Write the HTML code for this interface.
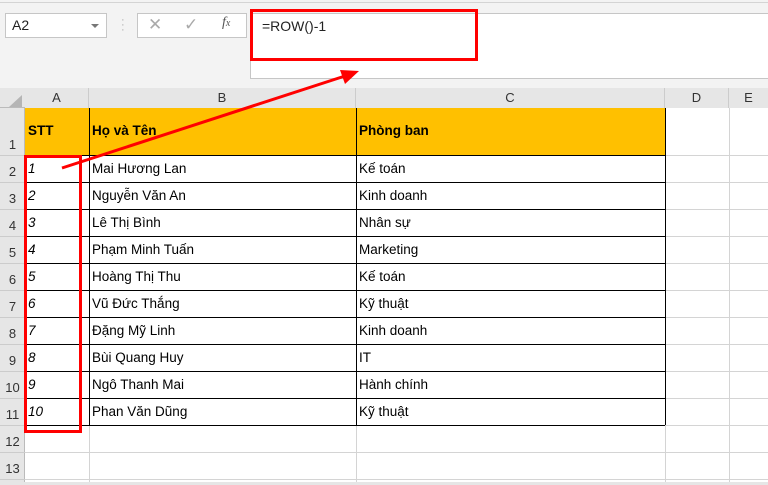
<!DOCTYPE html>
<html><head><meta charset="utf-8"><style>
*{margin:0;padding:0;box-sizing:border-box}
body{width:768px;height:482px;overflow:hidden;background:#e6e6e6;font-family:"Liberation Sans",sans-serif;position:relative}
.a{position:absolute}
.hd{position:absolute;background:#e6e6e6;color:#333;font-size:13px;text-align:center}
.cell{position:absolute;font-size:13.5px;color:#000;white-space:nowrap;padding-left:3px;line-height:27px}
</style></head><body>
<div class="a" style="left:0;top:0;width:768px;height:88px;background:#f3f3f3"></div>
<div class="a" style="left:0;top:2px;width:768px;height:1px;background:#d4d4d4"></div>
<div class="a" style="left:5px;top:13px;width:102px;height:25px;background:#fff;border:1px solid #c6c6c6;font-size:14px;line-height:23px;padding-left:6px;color:#222">A2<span style="position:absolute;right:7px;top:10px;border-left:4px solid transparent;border-right:4px solid transparent;border-top:4px solid #777"></span></div>
<div class="a" style="left:121px;top:18px;color:#aaa;font-size:11px;line-height:5px">·<br>·<br>·</div>
<div class="a" style="left:137px;top:13px;width:110px;height:25px;background:#fff;border:1px solid #c6c6c6"></div>
<div class="a" style="left:148px;top:15px;color:#aaa;font-size:17px">✕</div>
<div class="a" style="left:184px;top:15px;color:#aaa;font-size:17px">✓</div>
<div class="a" style="left:222px;top:15px;color:#555;font-size:14px;font-style:italic;font-family:'Liberation Serif',serif">f<span style="font-size:10px">x</span></div>
<div class="a" style="left:250px;top:13px;width:518px;height:66px;background:#fff;border:1px solid #c6c6c6;border-right:none"></div>
<div class="a" style="left:262px;top:18px;font-size:14px;color:#222">=ROW()-1</div>
<div class="a" style="left:250px;top:9px;width:228px;height:52px;border:3px solid #f00"></div>
<!-- grid -->
<div class="a" style="left:25px;top:108px;width:743px;height:374px;background:#fff"></div>
<div class="a" style="left:89px;top:108px;width:577px;height:47px;background:#ffc000"></div>
<div class="hd" style="left:0;top:88px;width:768px;height:20px;border-bottom:1px solid #bbb"></div>
<div class="hd" style="left:25px;top:88px;width:64px;line-height:20px;border-right:1px solid #ccc">A</div>
<div class="hd" style="left:89px;top:88px;width:267px;line-height:20px;border-right:1px solid #ccc">B</div>
<div class="hd" style="left:356px;top:88px;width:309px;line-height:20px;border-right:1px solid #ccc">C</div>
<div class="hd" style="left:665px;top:88px;width:64px;line-height:20px;border-right:1px solid #ccc">D</div>
<div class="hd" style="left:729px;top:88px;width:39px;line-height:20px">E</div>
<div class="a" style="left:9px;top:95px;border-left:13px solid transparent;border-bottom:12px solid #b5b5b5"></div>
<div class="a" style="left:0;top:108px;width:25px;height:374px;background:#e6e6e6;border-right:1px solid #bbb"></div>
<svg class="a" style="left:0;top:0" width="768" height="482">
<g stroke="#d4d4d4" stroke-width="1">
<line x1="729.5" y1="108" x2="729.5" y2="482"/>
<line x1="89.5" y1="425" x2="89.5" y2="482"/><line x1="356.5" y1="425" x2="356.5" y2="482"/><line x1="665.5" y1="108" x2="665.5" y2="482"/>
<line x1="25" y1="452.5" x2="768" y2="452.5"/><line x1="25" y1="479.5" x2="768" y2="479.5"/>
<line x1="665" y1="155.5" x2="768" y2="155.5"/>
<g id="rl"></g>
</g>
<g stroke="#ccc"><line x1="0" y1="155.5" x2="25" y2="155.5"/>
<line x1="0" y1="182.5" x2="25" y2="182.5"/><line x1="0" y1="209.5" x2="25" y2="209.5"/><line x1="0" y1="236.5" x2="25" y2="236.5"/><line x1="0" y1="263.5" x2="25" y2="263.5"/><line x1="0" y1="290.5" x2="25" y2="290.5"/><line x1="0" y1="317.5" x2="25" y2="317.5"/><line x1="0" y1="344.5" x2="25" y2="344.5"/><line x1="0" y1="371.5" x2="25" y2="371.5"/><line x1="0" y1="398.5" x2="25" y2="398.5"/><line x1="0" y1="425.5" x2="25" y2="425.5"/><line x1="0" y1="452.5" x2="25" y2="452.5"/><line x1="0" y1="479.5" x2="25" y2="479.5"/></g>
<g stroke="#d4d4d4"><line x1="665" y1="182.5" x2="768" y2="182.5"/><line x1="665" y1="209.5" x2="768" y2="209.5"/><line x1="665" y1="236.5" x2="768" y2="236.5"/><line x1="665" y1="263.5" x2="768" y2="263.5"/><line x1="665" y1="290.5" x2="768" y2="290.5"/><line x1="665" y1="317.5" x2="768" y2="317.5"/><line x1="665" y1="344.5" x2="768" y2="344.5"/><line x1="665" y1="371.5" x2="768" y2="371.5"/><line x1="665" y1="398.5" x2="768" y2="398.5"/><line x1="665" y1="425.5" x2="768" y2="425.5"/></g>
<g stroke="#000" stroke-width="1">
<line x1="89.5" y1="108" x2="89.5" y2="425"/><line x1="356.5" y1="108" x2="356.5" y2="425"/><line x1="665.5" y1="108" x2="665.5" y2="425"/>
<line x1="25" y1="155.5" x2="665" y2="155.5"/><line x1="25" y1="182.5" x2="665" y2="182.5"/><line x1="25" y1="209.5" x2="665" y2="209.5"/><line x1="25" y1="236.5" x2="665" y2="236.5"/><line x1="25" y1="263.5" x2="665" y2="263.5"/><line x1="25" y1="290.5" x2="665" y2="290.5"/><line x1="25" y1="317.5" x2="665" y2="317.5"/><line x1="25" y1="344.5" x2="665" y2="344.5"/><line x1="25" y1="371.5" x2="665" y2="371.5"/><line x1="25" y1="398.5" x2="665" y2="398.5"/><line x1="25" y1="425.5" x2="665" y2="425.5"/>
</g>
</svg>
<div class="a" style="left:25px;top:108px;width:64px;height:47px;background:#ffc000"></div>
<div class="cell" style="left:25px;top:117px;font-weight:bold">STT</div>
<div class="cell" style="left:89px;top:117px;font-weight:bold">Họ và Tên</div>
<div class="cell" style="left:356px;top:117px;font-weight:bold">Phòng ban</div>
<div class="a" style="left:0;top:108px;width:25px;font-size:13px;color:#333;text-align:center">
<div style="height:47px;line-height:74px">1</div>
<div style="height:27px;line-height:33px">2</div><div style="height:27px;line-height:33px">3</div><div style="height:27px;line-height:33px">4</div><div style="height:27px;line-height:33px">5</div><div style="height:27px;line-height:33px">6</div><div style="height:27px;line-height:33px">7</div><div style="height:27px;line-height:33px">8</div><div style="height:27px;line-height:33px">9</div><div style="height:27px;line-height:33px">10</div><div style="height:27px;line-height:33px">11</div><div style="height:27px;line-height:33px">12</div><div style="height:27px;line-height:33px">13</div></div>
<div class="a" style="left:25px;top:155px;font-size:13.5px;font-style:italic;line-height:27px;padding-left:3px">1<br>2<br>3<br>4<br>5<br>6<br>7<br>8<br>9<br>10</div>
<div class="a" style="left:89px;top:155px;font-size:13.5px;line-height:27px;padding-left:3px">Mai Hương Lan<br>Nguyễn Văn An<br>Lê Thị Bình<br>Phạm Minh Tuấn<br>Hoàng Thị Thu<br>Vũ Đức Thắng<br>Đặng Mỹ Linh<br>Bùi Quang Huy<br>Ngô Thanh Mai<br>Phan Văn Dũng</div>
<div class="a" style="left:356px;top:155px;font-size:13.5px;line-height:27px;padding-left:3px">Kế toán<br>Kinh doanh<br>Nhân sự<br>Marketing<br>Kế toán<br>Kỹ thuật<br>Kinh doanh<br>IT<br>Hành chính<br>Kỹ thuật</div>
<div class="a" style="left:24px;top:155px;width:58px;height:278px;border:3px solid #f00"></div>
<svg class="a" style="left:0;top:0" width="768" height="482">
<line x1="62" y1="168" x2="345" y2="76" stroke="#f00" stroke-width="3"/>
<polygon points="359,71 340,70 345,84" fill="#f00"/>
</svg>
</body></html>
